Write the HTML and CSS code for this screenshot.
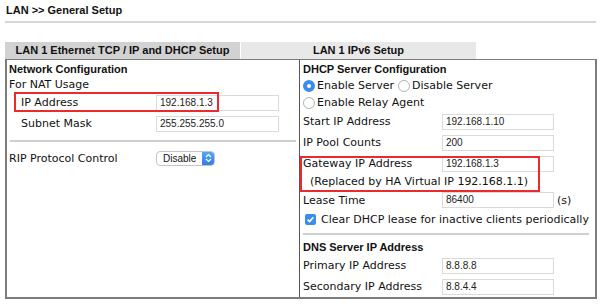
FILE: index.html
```html
<!DOCTYPE html>
<html lang="en">
<head>
    <meta charset="UTF-8">
    <meta name="viewport" content="width=device-width, initial-scale=1.0">
    <title>LAN General Setup</title>
    <link rel="stylesheet" href="styles.css">
</head>
<body>
    <div class="page">
        <h1 class="page-title">LAN &gt;&gt; General Setup</h1>
        <div class="title-rule"></div>

        <div class="tabs">
            <div class="tab active">LAN 1 Ethernet TCP / IP and DHCP Setup</div>
            <div class="tab">LAN 1 IPv6 Setup</div>
        </div>

        <div class="panel">
            <div class="col col-left">
                <div class="heading">Network Configuration</div>
                <div class="text-row">For NAT Usage</div>
                <div class="field-row indent highlight hl-ip">
                    <span class="label">IP Address</span>
                    <span class="value-box wide">192.168.1.3</span>
                </div>
                <div class="field-row indent">
                    <span class="label">Subnet Mask</span>
                    <span class="value-box wide">255.255.255.0</span>
                </div>
                <div class="rule"></div>
                <div class="field-row rip-row">
                    <span class="label">RIP Protocol Control</span>
                    <span class="select">
                        <span class="select-text">Disable</span>
                        <span class="select-arrows">
                            <svg width="7" height="10" viewBox="0 0 7 10"><path d="M1 4 L3.5 1.5 L6 4 M1 6 L3.5 8.5 L6 6" fill="none" stroke="#fff" stroke-width="1.2"/></svg>
                        </span>
                    </span>
                </div>
            </div>

            <div class="col col-right">
                <div class="heading">DHCP Server Configuration</div>
                <div class="option-row">
                    <span class="radio checked"></span>Enable Server
                    <span class="radio spaced"></span>Disable Server
                </div>
                <div class="option-row">
                    <span class="radio"></span>Enable Relay Agent
                </div>
                <div class="field-row">
                    <span class="label">Start IP Address</span>
                    <span class="value-box">192.168.1.10</span>
                </div>
                <div class="field-row">
                    <span class="label">IP Pool Counts</span>
                    <span class="value-box">200</span>
                </div>
                <div class="highlight hl-gateway">
                    <div class="field-row">
                        <span class="label">Gateway IP Address</span>
                        <span class="value-box">192.168.1.3</span>
                    </div>
                    <div class="text-row note">(Replaced by HA Virtual IP 192.168.1.1)</div>
                </div>
                <div class="field-row lease-row">
                    <span class="label">Lease Time</span>
                    <span class="value-box">86400</span>
                    <span class="unit">(s)</span>
                </div>
                <div class="option-row check-row">
                    <span class="checkbox">
                        <svg width="11" height="11" viewBox="0 0 11 11"><path d="M2.6 5.6 L4.6 7.6 L8.4 3.2" fill="none" stroke="#fff" stroke-width="1.6"/></svg>
                    </span>Clear DHCP lease for inactive clients periodically
                </div>
                <div class="rule"></div>
                <div class="heading">DNS Server IP Address</div>
                <div class="field-row">
                    <span class="label">Primary IP Address</span>
                    <span class="value-box">8.8.8.8</span>
                </div>
                <div class="field-row">
                    <span class="label">Secondary IP Address</span>
                    <span class="value-box">8.8.4.4</span>
                </div>
            </div>
        </div>
    </div>
</body>
</html>
```

FILE: styles.css
```css
body {
    margin: 0;
    padding: 0;
    background-color: #fff;
    color: #111;
    font-family: "DejaVu Sans", Verdana, sans-serif;
    font-size: 11px;
}

.page {
    padding: 0 4px 0 5px;
}

.page-title {
    margin: 0;
    padding: 3px 0 0 1px;
    height: 14px;
    line-height: 14px;
    font-family: "Liberation Sans", Arial, sans-serif;
    font-size: 11px;
    font-weight: bold;
}

.title-rule {
    margin-top: 4px;
    height: 2px;
    background-color: #d6d6d6;
}

.tabs {
    display: flex;
    gap: 1px;
    margin-top: 19px;
}

.tab {
    width: 235px;
    height: 17px;
    line-height: 17px;
    text-align: center;
    background-color: #e8e8e8;
    font-family: "Liberation Sans", Arial, sans-serif;
    font-size: 11px;
    font-weight: bold;
}

.tab.active {
    background-color: #d2d2d2;
}

.panel {
    display: grid;
    grid-template-columns: 293px 1fr;
    width: 588px;
    border: 2px solid #7c7c7c;
    border-top-width: 1px;
}

.col {
    padding-top: 2px;
}

.col-left {
    border-right: 1px solid #555;
    padding-left: 2px;
}

.col-right {
    padding-left: 3px;
    padding-right: 3px;
}

.heading {
    height: 15px;
    line-height: 15px;
    font-family: "Liberation Sans", Arial, sans-serif;
    font-size: 11px;
    font-weight: bold;
}

.text-row {
    height: 15px;
    line-height: 15px;
}

.field-row {
    display: grid;
    grid-template-columns: 147px auto;
    align-items: center;
    height: 21px;
}

.col-right .field-row {
    grid-template-columns: 139px auto;
}

.field-row.indent {
    padding-left: 12px;
    grid-template-columns: 135px auto;
}

.value-box {
    box-sizing: border-box;
    width: 112px;
    height: 16px;
    line-height: 14px;
    padding-left: 3px;
    border: 1px solid #dadada;
    font-family: "Liberation Sans", Arial, sans-serif;
    font-size: 10px;
    color: #222;
}

.value-box.wide {
    width: 123px;
}

.rule {
    height: 2px;
    margin: 6px 3px 6px 1px;
    background-color: #cfcfcf;
}

.rip-row {
    height: 20px;
}

.select {
    display: flex;
    align-items: stretch;
    box-sizing: border-box;
    width: 59px;
    height: 15px;
    border: 1px solid #c4c4c4;
    border-radius: 4px;
    background-color: #fff;
    overflow: hidden;
}

.select-text {
    flex: 1;
    padding-left: 6px;
    line-height: 13px;
    font-family: "Liberation Sans", Arial, sans-serif;
    font-size: 10px;
}

.select-arrows {
    display: flex;
    align-items: center;
    justify-content: center;
    width: 12px;
    background: linear-gradient(#5aa3f7, #2f7fe8);
}

.option-row {
    display: flex;
    align-items: center;
    height: 17px;
}

.radio {
    box-sizing: border-box;
    width: 12px;
    height: 12px;
    margin-right: 2px;
    border: 1px solid #b3b3b3;
    border-radius: 50%;
    background-color: #fff;
}

.radio.checked {
    border: 4px solid #3a8cf0;
    background-color: #fff;
}

.radio.spaced {
    margin-left: 4px;
}

.highlight {
    position: relative;
}

.highlight::after {
    content: "";
    position: absolute;
    border: 2px solid #ea2a2e;
    pointer-events: none;
}

.hl-ip::after {
    top: 0;
    bottom: 1px;
    left: 5px;
    width: 201px;
}

.hl-gateway::after {
    top: 3px;
    bottom: -2px;
    left: -3px;
    width: 236px;
}

.note {
    height: 16px;
    line-height: 16px;
    padding-left: 7px;
}

.lease-row {
    height: 20px;
}

.col-right .lease-row {
    grid-template-columns: 139px 112px auto;
}

.unit {
    padding-left: 3px;
}

.check-row {
    height: 18px;
}

.checkbox {
    display: flex;
    width: 11px;
    height: 11px;
    margin: 0 5px 0 2px;
    border-radius: 2px;
    background-color: #3a8cf0;
}

.col-right .rule {
    margin: 5px 3px 5px 0;
}
```
